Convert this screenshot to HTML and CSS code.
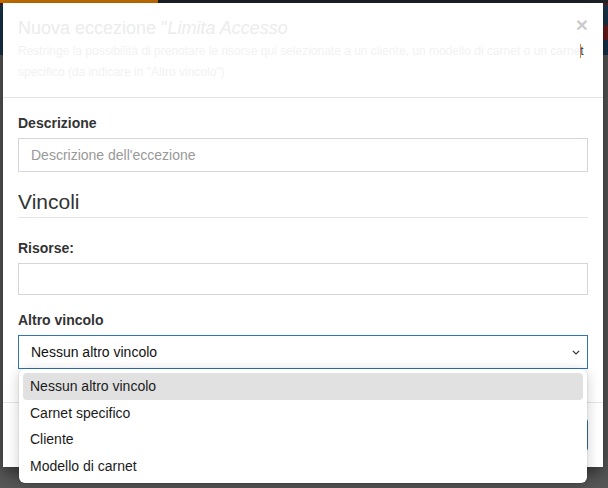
FILE: index.html
```html
<!DOCTYPE html>
<html lang="it">
<head>
<meta charset="utf-8">
<title>Nuova eccezione</title>
<link rel="stylesheet" href="styles.css">
</head>
<body>
  <div class="page">
    <div class="topline"><span class="topline-accent"></span></div>
    <div class="navbar"><span class="nav-btn"></span></div>
    <div class="content"></div>
  </div>

  <div class="modal">
    <div class="modal-header">
      <button class="close" type="button">&times;</button>
      <h4 class="modal-title">Nuova eccezione "<em>Limita Accesso</em></h4>
      <p class="modal-sub">Restringe la possibilità di prenotare le risorse qui selezionate a un cliente, un modello di carnet o un carne<span class="sel">t</span> specifico (da indicare in "Altro vincolo")</p>
    </div>

    <div class="modal-body">
      <div class="form-group">
        <label class="control-label">Descrizione</label>
        <input class="form-control" type="text" placeholder="Descrizione dell'eccezione">
      </div>

      <div class="legend">Vincoli</div>

      <div class="form-group">
        <label class="control-label">Risorse:</label>
        <div class="form-control multi"></div>
      </div>

      <div class="form-group last">
        <label class="control-label">Altro vincolo</label>
        <div class="select-wrap">
          <div class="form-control select is-open">
            <span>Nessun altro vincolo</span>
            <svg class="chevron" width="8" height="5" viewBox="0 0 8 5"><path d="M0.8 0.8l3.2 3.2L7.2 0.8" fill="none" stroke="#333" stroke-width="1.2"/></svg>
          </div>
          <ul class="dropdown">
            <li class="active">Nessun altro vincolo</li>
            <li>Carnet specifico</li>
            <li>Cliente</li>
            <li>Modello di carnet</li>
          </ul>
        </div>
      </div>
    </div>

    <div class="modal-footer">
      <button class="btn" type="button">Annulla</button>
      <button class="btn btn-primary" type="button">Salva</button>
    </div>
  </div>
</body>
</html>
```

FILE: styles.css
```css
* { box-sizing: border-box; }

html, body {
  margin: 0;
  height: 100%;
}

body {
  font-family: "Liberation Sans", Arial, sans-serif;
  font-size: 14px;
  line-height: 20px;
  color: #333;
  background: #565656;
  overflow: hidden;
  position: relative;
}

/* dimmed application behind the dialog */
.page {
  display: flex;
  flex-direction: column;
  height: 488px;
}

.topline {
  height: 3px;
  background: #1e2329;
  display: flex;
}

.topline-accent {
  width: 158px;
  background: #c87000;
}

.navbar {
  height: 52px;
  background: #18334a;
  border-top: 2px solid #5a1414;
  position: relative;
}

.nav-btn {
  position: absolute;
  right: 0;
  top: 20px;
  width: 8px;
  height: 15px;
  background: #6a1b1b;
}

.content {
  flex: 1;
  background: #575757;
}

/* dialog */
.modal {
  position: absolute;
  top: 3px;
  left: 3px;
  width: 600px;
  background: #fff;
  box-shadow: 0 5px 15px rgba(0, 0, 0, 0.5);
}

.modal-header {
  padding: 15px 15px 14px;
  border-bottom: 1px solid #e5e5e5;
}

.close {
  float: right;
  margin-top: -4px;
  padding: 0;
  border: 0;
  background: transparent;
  font-family: "Liberation Sans", Arial, sans-serif;
  font-size: 21px;
  font-weight: bold;
  line-height: 1;
  color: #000;
  opacity: 0.2;
}

.modal-title {
  margin: 0;
  font-size: 18px;
  font-weight: normal;
  line-height: 20px;
  color: #ececec;
}

.modal-sub {
  margin: 3px 0 0;
  font-size: 12px;
  line-height: 21px;
  color: #f2f2f2;
}

.sel {
  color: #1d3f78;
  box-shadow: inset 1px 0 0 #d88a2a;
}

.modal-body {
  padding: 15px 15px 18px;
}

.form-group {
  margin-bottom: 15px;
}

.control-label {
  display: block;
  margin-bottom: 5px;
  font-weight: bold;
  color: #333;
}

.form-control {
  display: block;
  width: 100%;
  height: 34px;
  padding: 6px 12px;
  font-family: inherit;
  font-size: 14px;
  line-height: 20px;
  color: #111;
  background: #fff;
  border: 1px solid #d5d5df;
  border-radius: 0;
}

.form-control::placeholder {
  color: #999;
}

.form-control.multi {
  height: 32px;
}

.legend {
  font-size: 21px;
  line-height: 30px;
  color: #333;
  border-bottom: 1px solid #e5e5e5;
  margin-bottom: 20px;
}

.select-wrap {
  position: relative;
}

.form-control.select {
  display: flex;
  align-items: center;
  justify-content: space-between;
  padding-right: 7px;
}

.form-control.select.is-open {
  border-color: #2f76b2;
}

.chevron {
  display: block;
  margin-top: 1px;
}

/* open option list */
.dropdown {
  position: absolute;
  top: 100%;
  left: 1px;
  right: 1px;
  z-index: 5;
  margin: 0;
  padding: 4px;
  list-style: none;
  background: #fff;
  border-radius: 6px;
  box-shadow: 0 3px 14px rgba(0, 0, 0, 0.2), 0 0 0 1px rgba(0, 0, 0, 0.05);
}

.dropdown li {
  height: 26.5px;
  line-height: 26.5px;
  padding: 0 7px;
  color: #1b1b1b;
  border-radius: 4px;
}

.dropdown li.active {
  background: #e1e1e1;
}

.modal-footer {
  padding: 15px;
  border-top: 1px solid #e5e5e5;
  display: flex;
  justify-content: flex-end;
  gap: 5px;
}

.btn {
  height: 34px;
  padding: 6px 12px;
  font-family: inherit;
  font-size: 14px;
  line-height: 20px;
  color: #333;
  background: #fff;
  border: 1px solid #ccc;
  border-radius: 4px;
}

.btn-primary {
  color: #fff;
  background: #337ab7;
  border-color: #2e6da4;
}
```
